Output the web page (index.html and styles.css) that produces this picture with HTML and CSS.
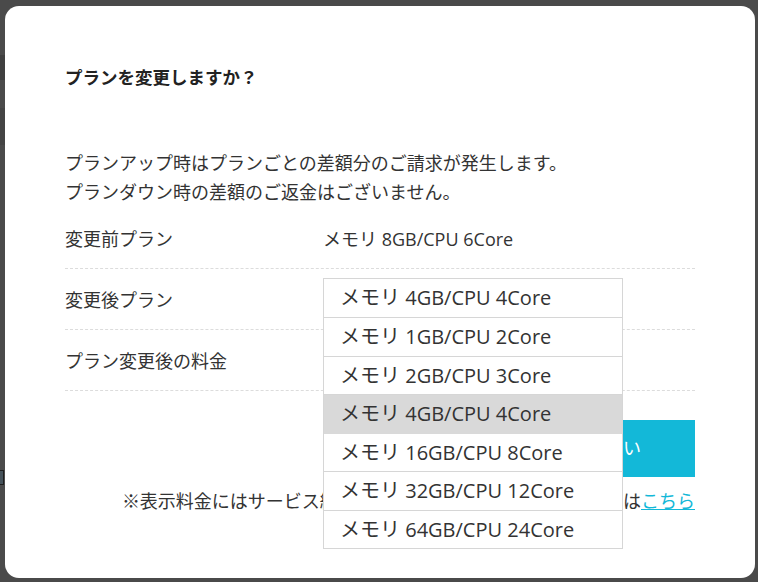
FILE: index.html
```html
<!DOCTYPE html>
<html lang="ja">
<head>
<meta charset="utf-8">
<title>プラン変更</title>
<link rel="stylesheet" href="styles.css">
</head>
<body>
<div class="screen">
  <div class="backdrop-marks">
    <span class="mark mark-a"></span>
    <span class="mark mark-b"></span>
    <span class="mark mark-c"></span>
  </div>
  <div class="modal">
    <h2 class="title">プランを変更しますか？</h2>
    <p class="lead">プランアップ時はプランごとの差額分のご請求が発生します。<br>プランダウン時の差額のご返金はございません。</p>
    <div class="plan-table">
      <div class="row">
        <div class="label">変更前プラン</div>
        <div class="value">メモリ 8GB/CPU 6Core</div>
      </div>
      <div class="row">
        <div class="label">変更後プラン</div>
        <div class="value">
          <div class="select">
            <span class="select-text">メモリ 4GB/CPU 4Core</span>
            <ul class="options">
              <li class="option">メモリ 1GB/CPU 2Core</li>
              <li class="option">メモリ 2GB/CPU 3Core</li>
              <li class="option is-active">メモリ 4GB/CPU 4Core</li>
              <li class="option">メモリ 16GB/CPU 8Core</li>
              <li class="option">メモリ 32GB/CPU 12Core</li>
              <li class="option">メモリ 64GB/CPU 24Core</li>
            </ul>
          </div>
        </div>
      </div>
      <div class="row">
        <div class="label">プラン変更後の料金</div>
        <div class="value">月額 8,800円（税込）</div>
      </div>
    </div>
    <div class="actions">
      <button class="btn" type="button">はい</button>
    </div>
    <p class="note">※表示料金にはサービス維持調整費が含まれております。詳細は<a class="link" href="#">こちら</a></p>
  </div>
</div>
</body>
</html>
```

FILE: styles.css
```css
* {
  box-sizing: border-box;
}

html, body {
  margin: 0;
  padding: 0;
}

body {
  background: #4a4a4a;
  font-family: "Open Sans", "Noto Sans CJK JP", sans-serif;
  color: #333;
}

.screen {
  position: relative;
  width: 758px;
  height: 582px;
  padding: 6px 3px 4px 5px;
  overflow: hidden;
}

.backdrop-marks {
  position: absolute;
  inset: 0;
  z-index: 0;
}

.mark {
  position: absolute;
  left: 0;
  display: block;
}

.mark-a {
  top: 55px;
  width: 5px;
  height: 25px;
  background: #3f3f3f;
}

.mark-b {
  top: 108px;
  width: 5px;
  height: 37px;
  background: #444;
}

.mark-c {
  top: 470px;
  width: 4px;
  height: 15px;
  border: 1px solid #1e1e1e;
  border-left: 0;
  background: #45525a;
}

.modal {
  position: relative;
  z-index: 1;
  width: 750px;
  height: 572px;
  background: #fff;
  border-radius: 14px;
  padding: 58px 60px 0 60px;
}

.title {
  margin: 0;
  font-size: 17.5px;
  line-height: 27px;
  font-weight: 700;
  color: #222;
}

.lead {
  margin: 58px 0 0;
  font-size: 18px;
  line-height: 29px;
}

.plan-table {
  margin-top: 1px;
}

.row {
  display: flex;
  align-items: center;
  height: 61px;
  border-bottom: 1px dashed #dcdcdc;
  font-size: 18px;
}

.label {
  width: 258px;
  flex: none;
}

.value {
  flex: 1;
}

.select {
  position: relative;
  width: 300px;
  height: 40px;
  margin-top: -2px;
  border: 1px solid #d6d6d6;
  background: #fff;
  display: flex;
  align-items: center;
  padding: 0 0 3px 16px;
  font-size: 20px;
  z-index: 5;
}

.options {
  position: absolute;
  top: 38px;
  left: -1px;
  width: 300px;
  margin: 0;
  padding: 0;
  list-style: none;
  background: #fff;
  border: 1px solid #d6d6d6;
  border-bottom: 0;
}

.option {
  height: 38.5px;
  display: flex;
  align-items: center;
  padding: 0 0 2px 16px;
  border-bottom: 1px solid #d6d6d6;
  font-size: 20px;
  color: #333;
}

.option.is-active {
  background: #d9d9d9;
  border-bottom-color: #d9d9d9;
}

.actions {
  display: flex;
  justify-content: flex-end;
  margin-top: 29px;
}

.btn {
  width: 144px;
  height: 57px;
  border: 0;
  border-radius: 0;
  background: #13b8d8;
  color: #fff;
  font-family: inherit;
  font-size: 18px;
  padding: 0 0 4px;
}

.note {
  margin: 11px 0 0;
  text-align: right;
  font-size: 18px;
  line-height: 27px;
}

.link {
  color: #13b8d8;
  text-decoration: underline;
}
```
